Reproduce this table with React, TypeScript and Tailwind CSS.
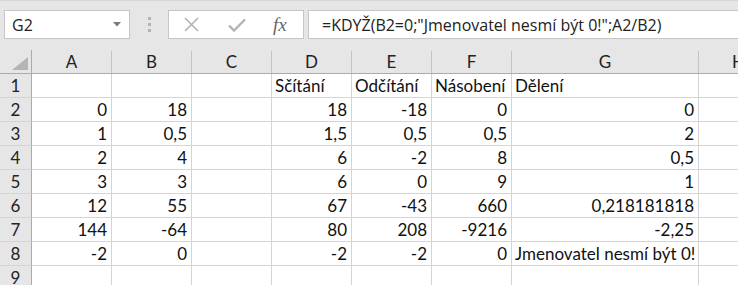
import React from 'react';

type Cell = { v: string; text?: boolean };

const COLS = ['A', 'B', 'C', 'D', 'E', 'F', 'G', 'H'];
const COL_W = ['w-[80px]', 'w-[80px]', 'w-[80px]', 'w-[80px]', 'w-[80px]', 'w-[80px]', 'w-[187px]', 'w-[80px]'];

const n = (v: string): Cell => ({ v });
const t = (v: string): Cell => ({ v, text: true });
const e: Cell = { v: '' };

// sheet contents, rows 1..9
const ROWS: Cell[][] = [
  [e, e, e, t('Sčítání'), t('Odčítání'), t('Násobení'), t('Dělení'), e],
  [n('0'), n('18'), e, n('18'), n('-18'), n('0'), n('0'), e],
  [n('1'), n('0,5'), e, n('1,5'), n('0,5'), n('0,5'), n('2'), e],
  [n('2'), n('4'), e, n('6'), n('-2'), n('8'), n('0,5'), e],
  [n('3'), n('3'), e, n('6'), n('0'), n('9'), n('1'), e],
  [n('12'), n('55'), e, n('67'), n('-43'), n('660'), n('0,218181818'), e],
  [n('144'), n('-64'), e, n('80'), n('208'), n('-9216'), n('-2,25'), e],
  [n('-2'), n('0'), e, n('-2'), n('-2'), n('0'), t('Jmenovatel nesmí být 0!'), e],
  [e, e, e, e, e, e, e, e],
];

const cellFont = "font-['Lato',sans-serif] text-[17px] text-[#111]";

const FormulaBar = () => (
  <div className="h-[50px] flex items-start pt-[9px] pl-[4px] border-t border-[#d6d6d6]">
    <div className="w-[126px] h-[29px] shrink-0 bg-white border border-[#c6c6c6] flex items-center justify-between pl-[7px] pr-[8px]">
      <span className="font-['Open_Sans',sans-serif] text-[16px] text-[#222]">G2</span>
      <svg width="8" height="5" viewBox="0 0 8 5">
        <path d="M0 0h8L4 4.5z" fill="#7a7a7a" />
      </svg>
    </div>
    <div className="w-[38px] h-[29px] shrink-0 flex flex-col items-center justify-center gap-[3px]">
      <span className="w-[3px] h-[3px] bg-[#b4b4b4]" />
      <span className="w-[3px] h-[3px] bg-[#b4b4b4]" />
      <span className="w-[3px] h-[3px] bg-[#b4b4b4]" />
    </div>
    <div className="w-[136px] h-[29px] shrink-0 bg-white border border-[#c6c6c6] flex items-center pl-[15px]">
      <svg width="15" height="15" viewBox="0 0 15 15">
        <path d="M1 1l13 13M14 1L1 14" stroke="#b3b3b3" strokeWidth="1.6" fill="none" />
      </svg>
      <svg width="18" height="14" viewBox="0 0 18 14" className="ml-[29px]">
        <path d="M1 7.5l5 5L17 1.5" stroke="#b3b3b3" strokeWidth="2.4" fill="none" />
      </svg>
      <span className="ml-[27px] font-['Liberation_Serif',serif] italic text-[19px] text-[#666] leading-none">fx</span>
    </div>
    <div className="flex-1 h-[29px] ml-[4px] bg-white border border-[#c6c6c6] border-r-0 flex items-center pl-[13px] whitespace-nowrap overflow-hidden">
      <span className="font-['Open_Sans',sans-serif] text-[16px] text-[#222]">
        =KDYŽ(B2=0;"Jmenovatel nesmí být 0!";A2/B2)
      </span>
    </div>
  </div>
);

const Sheet = () => (
  <div className="w-max">
    {/* column headers */}
    <div className="flex h-[24px]">
      <div className="w-[32px] h-[24px] border-r border-b border-[#ababab] flex items-end justify-end pr-[3px] pb-[3px]">
        <svg width="16" height="13" viewBox="0 0 16 13">
          <path d="M16 0v13H0z" fill="#b5b5b5" />
        </svg>
      </div>
      {COLS.map((c, i) => (
        <div key={c} className={`${COL_W[i]} h-[24px] border-b border-[#ababab] flex items-end`}>
          <div className={`w-full h-[22px] border-r border-[#c4c4c4] flex items-center justify-center ${cellFont} text-[#222]`}>
            {c}
          </div>
        </div>
      ))}
    </div>
    {ROWS.map((row, r) => (
      <div key={r} className="flex h-[24px]">
        <div className={`w-[32px] h-[24px] border-r border-b border-r-[#ababab] border-b-[#d4d4d4] flex items-center justify-center pt-[1px] ${cellFont} text-[#222]`}>
          {r + 1}
        </div>
        {row.map((cell, i) => (
          <div
            key={i}
            className={`${COL_W[i]} h-[24px] bg-white border-r border-b border-[#d4d4d4] flex items-center pt-[1px] whitespace-nowrap ${cellFont} ${cell.text ? 'justify-start pl-[3px]' : 'justify-end pr-[4px]'}`}
          >
            {cell.v}
          </div>
        ))}
      </div>
    ))}
  </div>
);

export default function App() {
  return (
    <div className="w-[738px] h-[285px] overflow-hidden bg-[#e6e6e6]">
      <FormulaBar />
      <Sheet />
    </div>
  );
}
